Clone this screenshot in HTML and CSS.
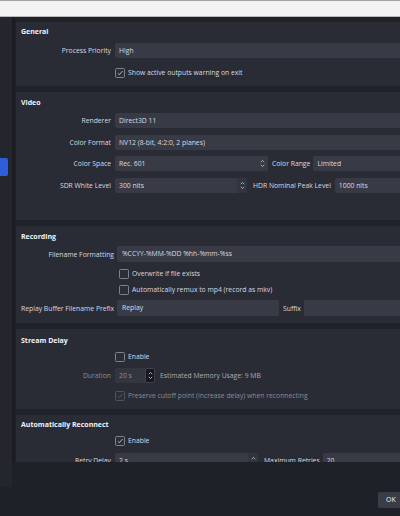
FILE: index.html
```html
<!DOCTYPE html>
<html>
<head>
<meta charset="utf-8">
<link rel="stylesheet" href="styles.css">
</head>
<body>
<div class="topbar"></div>
<div class="main">
  <div class="sidebar"><div class="sel"></div></div>
  <div class="sep"></div>
  <div class="panel">
    <div class="card general">
      <div class="hdr">General</div>
      <div class="row r1"><div class="lbl">Process Priority</div><div class="inp grow">High</div></div>
      <div class="row r2"><div class="lbl"></div><span class="cb checked"><svg viewBox="0 0 9 9"><path d="M2 4.6 L3.8 6.4 L7.2 2.4" /></svg></span><span class="ctext">Show active outputs warning on exit</span></div>
    </div>
    <div class="card video">
      <div class="hdr">Video</div>
      <div class="row v1"><div class="lbl">Renderer</div><div class="inp grow">Direct3D 11</div></div>
      <div class="row v2"><div class="lbl">Color Format</div><div class="inp grow">NV12 (8-bit, 4:2:0, 2 planes)</div></div>
      <div class="row v3"><div class="lbl">Color Space</div><div class="inp cs">Rec. 601<span class="chev"><svg viewBox="0 0 8 12"><path d="M2 4.5 L4 2.5 L6 4.5 M2 7.5 L4 9.5 L6 7.5"/></svg></span></div><div class="mid crl">Color Range</div><div class="inp grow">Limited</div></div>
      <div class="row v4"><div class="lbl">SDR White Level</div><div class="inp sdr">300 nits<span class="spin light"><svg viewBox="0 0 8 12"><path d="M2 4.5 L4 2.5 L6 4.5 M2 7.5 L4 9.5 L6 7.5"/></svg></span></div><div class="mid hdr-l">HDR Nominal Peak Level</div><div class="inp grow">1000 nits</div></div>
    </div>
    <div class="card rec">
      <div class="hdr">Recording</div>
      <div class="row c1"><div class="lbl">Filename Formatting</div><div class="inp grow">%CCYY-%MM-%DD %hh-%mm-%ss</div></div>
      <div class="row c2"><div class="lbl"></div><span class="cb"></span><span class="ctext">Overwrite if file exists</span></div>
      <div class="row c3"><div class="lbl"></div><span class="cb"></span><span class="ctext">Automatically remux to mp4 (record as mkv)</span></div>
      <div class="row c4"><div class="lbl">Replay Buffer Filename Prefix</div><div class="inp rp">Replay</div><div class="mid suf">Suffix</div><div class="inp grow"></div></div>
    </div>
    <div class="card delay">
      <div class="hdr">Stream Delay</div>
      <div class="row d1"><div class="lbl"></div><span class="cb"></span><span class="ctext">Enable</span></div>
      <div class="row d2"><div class="lbl dim">Duration</div><div class="inp dur dim">20 s<span class="spin dark"><svg viewBox="0 0 8 12"><path d="M2 4.5 L4 2.5 L6 4.5 M2 7.5 L4 9.5 L6 7.5"/></svg></span></div><div class="est">Estimated Memory Usage: 9 MB</div></div>
      <div class="row d3"><div class="lbl"></div><span class="cb disabled"><svg viewBox="0 0 9 9"><path d="M2 4.6 L3.8 6.4 L7.2 2.4" /></svg></span><span class="ctext dim">Preserve cutoff point (increase delay) when reconnecting</span></div>
    </div>
    <div class="card recon">
      <div class="hdr">Automatically Reconnect</div>
      <div class="row a1"><div class="lbl"></div><span class="cb checked"><svg viewBox="0 0 9 9"><path d="M2 4.6 L3.8 6.4 L7.2 2.4" /></svg></span><span class="ctext">Enable</span></div>
      <div class="row a2"><div class="lbl">Retry Delay</div><div class="inp rd">2 s<span class="spin light"><svg viewBox="0 0 8 12"><path d="M2 4.5 L4 2.5 L6 4.5"/></svg></span></div><div class="mid mr">Maximum Retries</div><div class="inp grow">20</div></div>
    </div>
  </div>
</div>
<div class="footer">
  <div class="okbtn">OK</div>
</div>
</body>
</html>
```

FILE: styles.css
```css
* { box-sizing: border-box; }
html, body {
  margin: 0;
  padding: 0;
  width: 400px;
  height: 516px;
  overflow: hidden;
  background: #1f2129;
  font-family: "Open Sans", "Noto Sans", sans-serif;
  font-size: 6.8px;
  color: #d9dae0;
}
.topbar {
  height: 17px;
  background: #f3f3f3;
  border-top: 1px solid #a4a4a4;
  border-bottom: 1px solid #b8b8b8;
}
.main {
  display: flex;
  height: 445px;
}
.sidebar {
  width: 12px;
  height: 470px;
  background: #24262e;
  position: relative;
  flex: none;
}
.sel {
  position: absolute;
  left: 0;
  top: 141px;
  width: 8px;
  height: 18px;
  background: #2f5fd8;
  border-radius: 0 2px 2px 0;
}
.sep {
  width: 3px;
  background: #1b1c22;
  flex: none;
}
.panel {
  flex: 1;
  background: #20222a;
  overflow: hidden;
  padding-top: 5px;
  padding-left: 1px;
}
.card {
  width: 420px;
  background: #292b35;
  padding-left: 5px;
  padding-top: 1px;
  margin-bottom: 6px;
}
.hdr {
  font-weight: 700;
  color: #f2f2f5;
  height: 18px;
  line-height: 18px;
  font-size: 7px;
}
.row {
  display: flex;
  align-items: center;
  height: 15px;
}
.lbl {
  width: 90px;
  margin-right: 4px;
  text-align: right;
  white-space: nowrap;
  flex: none;
}
.rec .lbl { width: 93px; margin-right: 3px; }
.inp {
  height: 15px;
  line-height: 15px;
  background: #383a46;
  border-radius: 2px;
  padding-left: 4px;
  white-space: nowrap;
  position: relative;
  flex: none;
}
.rec .inp { padding-left: 5px; }
.inp.grow { flex: 1; }
.mid { white-space: nowrap; flex: none; }
.cb {
  width: 10px;
  height: 10px;
  border: 1px solid #80838f;
  border-radius: 1.5px;
  background: #2b2d37;
  flex: none;
  display: flex;
}
.cb svg { width: 8px; height: 8px; }
.cb path { fill: none; stroke: #d8d9e0; stroke-width: 0.9; }
.cb.disabled { border-color: #50525d; }
.cb.disabled path { stroke: #5e606b; }
.ctext { margin-left: 3px; white-space: nowrap; }
.rec .cb { margin-left: 2px; }
.dim { color: #8a8c97; }
.chev, .spin {
  position: absolute;
  top: 0;
  height: 15px;
  display: flex;
  align-items: center;
  justify-content: center;
}
.chev svg, .spin svg { width: 7px; height: 11px; }
.chev path, .spin path { fill: none; stroke: #c8c9d0; stroke-width: 0.9; }
.chev { right: 2px; width: 8px; }
.spin.light { right: 0; width: 10px; background: #32343f; border-radius: 0 2px 2px 0; }
.spin.dark { right: 0; width: 10px; background: #17181e; border: 1px solid #3e404b; border-radius: 2px; }
.spin.dark path { stroke: #d8d9e0; }

/* General */
.general { padding-bottom: 6px; }
.r1 { margin-top: 2px; }
.r2 { margin-top: 7px; }

/* Video */
.video { padding-bottom: 27px; padding-top: 2px; }
.v1 { margin-top: 1px; }
.v2 { margin-top: 7px; }
.v3 { margin-top: 6px; }
.v4 { margin-top: 7px; }
.cs { width: 153px; }
.crl { margin: 0 3px 0 4px; }
.sdr { width: 132px; }
.hdr-l { margin: 0 4px 0 6px; }

/* Recording */
.rec { padding-bottom: 7px; padding-top: 2px; }
.c1 { margin-top: 0; height: 16px; }
.c1 .inp { height: 16px; line-height: 16px; }
.c2 { margin-top: 4px; }
.c3 { margin-top: 1px; }
.c4 { margin-top: 3px; height: 16px; }
.c4 .inp { height: 16px; line-height: 16px; }
.rp { width: 162px; }
.suf { margin: 0 3px 0 4px; }

/* Stream delay */
.delay { padding-top: 3px; padding-bottom: 6px; }
.d1 { margin-top: -1px; }
.d2 { margin-top: 4px; }
.d3 { margin-top: 5px; }
.dur { width: 40px; background: #33353f; }
.est { margin-left: 5px; color: #a9abb5; white-space: nowrap; }

/* Reconnect */
.recon { padding-bottom: 10px; padding-top: 1px; }
.a1 { margin-top: -1px; }
.a2 { margin-top: 5px; }
.rd { width: 143px; }
.mr { margin: 0 3px 0 6px; }

.footer {
  height: 54px;
  display: flex;
  justify-content: flex-end;
  padding-top: 30px;
}
.okbtn {
  width: 28px;
  height: 16px;
  line-height: 16px;
  margin-right: -6px;
  background: #3a3c47;
  border-radius: 2px;
  color: #f0f0f4;
  padding-left: 8px;
  font-size: 7px;
}
```
